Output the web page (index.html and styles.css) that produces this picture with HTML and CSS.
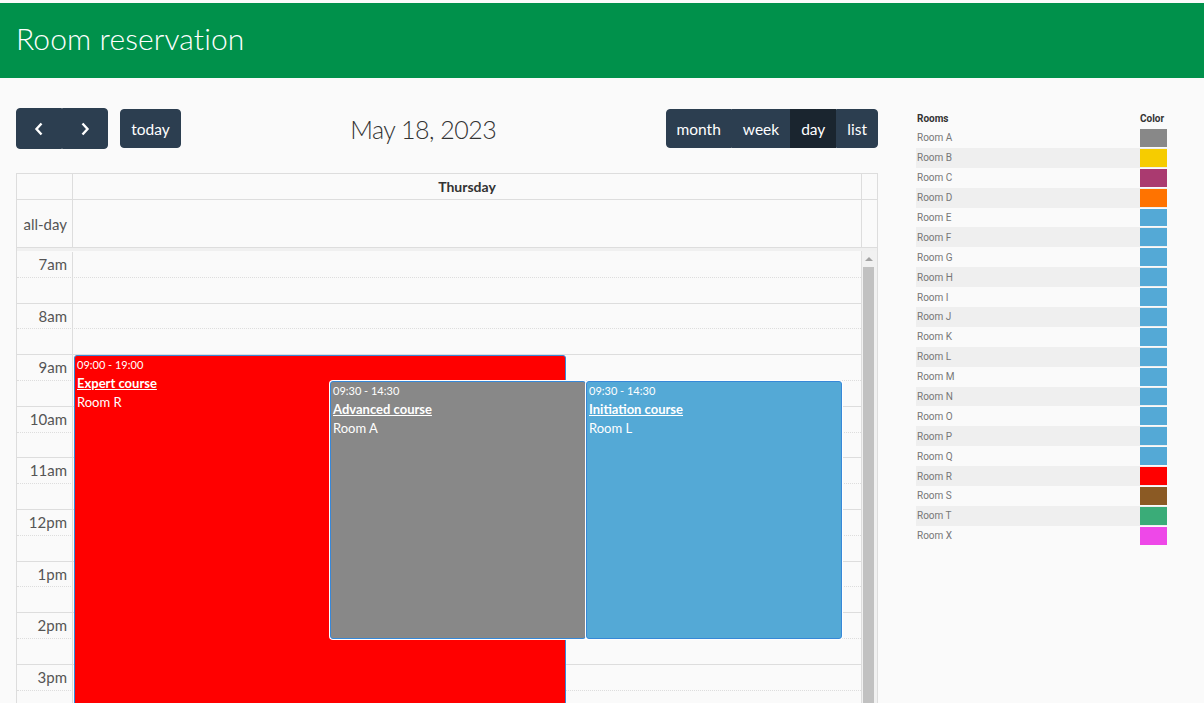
FILE: index.html
```html
<!DOCTYPE html>
<html lang="en">
<head>
<meta charset="utf-8">
<title>Room reservation</title>
<link rel="stylesheet" href="styles.css">
</head>
<body>
<header class="topbar"><h1 class="brand">Room reservation</h1></header>
<main class="layout">
  <section class="calendar">
    <div class="toolbar">
      <div class="chunk">
        <div class="btn-group">
          <button class="btn btn-icon" aria-label="prev"><svg width="10" height="14" viewBox="0 0 10 14"><polyline points="7.5,1.5 2.5,7 7.5,12.5" fill="none" stroke="#fff" stroke-width="2.4"/></svg></button>
          <button class="btn btn-icon" aria-label="next"><svg width="10" height="14" viewBox="0 0 10 14"><polyline points="2.5,1.5 7.5,7 2.5,12.5" fill="none" stroke="#fff" stroke-width="2.4"/></svg></button>
        </div>
        <button class="btn btn-today">today</button>
      </div>
      <h2 class="title">May 18, 2023</h2>
      <div class="btn-group views">
        <button class="btn">month</button>
        <button class="btn">week</button>
        <button class="btn active">day</button>
        <button class="btn">list</button>
      </div>
    </div>
    <div class="grid">
      <div class="head-row">
        <div class="axis"></div>
        <div class="lane day-head">Thursday</div>
        <div class="gutter"></div>
      </div>
      <div class="allday-row">
        <div class="axis axis-label">all-day</div>
        <div class="lane"></div>
        <div class="gutter"></div>
      </div>
      <div class="divider"></div>
      <div class="body">
        <div class="timegrid">
          <div class="slot hour"><div class="axis axis-label">7am</div><div class="lane"></div></div>
          <div class="slot half"><div class="axis"></div><div class="lane"></div></div>
          <div class="slot hour"><div class="axis axis-label">8am</div><div class="lane"></div></div>
          <div class="slot half"><div class="axis"></div><div class="lane"></div></div>
          <div class="slot hour"><div class="axis axis-label">9am</div><div class="lane"></div></div>
          <div class="slot half"><div class="axis"></div><div class="lane"></div></div>
          <div class="slot hour"><div class="axis axis-label">10am</div><div class="lane"></div></div>
          <div class="slot half"><div class="axis"></div><div class="lane"></div></div>
          <div class="slot hour"><div class="axis axis-label">11am</div><div class="lane"></div></div>
          <div class="slot half"><div class="axis"></div><div class="lane"></div></div>
          <div class="slot hour"><div class="axis axis-label">12pm</div><div class="lane"></div></div>
          <div class="slot half"><div class="axis"></div><div class="lane"></div></div>
          <div class="slot hour"><div class="axis axis-label">1pm</div><div class="lane"></div></div>
          <div class="slot half"><div class="axis"></div><div class="lane"></div></div>
          <div class="slot hour"><div class="axis axis-label">2pm</div><div class="lane"></div></div>
          <div class="slot half"><div class="axis"></div><div class="lane"></div></div>
          <div class="slot hour"><div class="axis axis-label">3pm</div><div class="lane"></div></div>
          <div class="slot half"><div class="axis"></div><div class="lane"></div></div>

          <div class="events">
            <a class="event ev-expert" style="top:104px;height:516px;">
              <span class="ev-time">09:00 - 19:00</span>
              <span class="ev-title">Expert course</span>
              <span class="ev-room">Room R</span>
            </a>
            <a class="event ev-advanced stacked" style="top:130px;height:258px;">
              <span class="ev-time">09:30 - 14:30</span>
              <span class="ev-title">Advanced course</span>
              <span class="ev-room">Room A</span>
            </a>
            <a class="event ev-initiation stacked" style="top:130px;height:258px;">
              <span class="ev-time">09:30 - 14:30</span>
              <span class="ev-title">Initiation course</span>
              <span class="ev-room">Room L</span>
            </a>
          </div>
        </div>
        <div class="scrollbar">
          <span class="sb-arrow"></span>
          <span class="sb-thumb"></span>
        </div>
      </div>
    </div>
  </section>

  <aside class="rooms">
    <table class="room-table">
      <thead><tr><th class="col-name">Rooms</th><th class="col-color">Color</th></tr></thead>
      <tbody>
        <tr><td>Room A</td><td class="sw"><span class="swatch c-gray"></span></td></tr>
        <tr><td>Room B</td><td class="sw"><span class="swatch c-yellow"></span></td></tr>
        <tr><td>Room C</td><td class="sw"><span class="swatch c-plum"></span></td></tr>
        <tr><td>Room D</td><td class="sw"><span class="swatch c-orange"></span></td></tr>
        <tr><td>Room E</td><td class="sw"><span class="swatch c-blue"></span></td></tr>
        <tr><td>Room F</td><td class="sw"><span class="swatch c-blue"></span></td></tr>
        <tr><td>Room G</td><td class="sw"><span class="swatch c-blue"></span></td></tr>
        <tr><td>Room H</td><td class="sw"><span class="swatch c-blue"></span></td></tr>
        <tr><td>Room I</td><td class="sw"><span class="swatch c-blue"></span></td></tr>
        <tr><td>Room J</td><td class="sw"><span class="swatch c-blue"></span></td></tr>
        <tr><td>Room K</td><td class="sw"><span class="swatch c-blue"></span></td></tr>
        <tr><td>Room L</td><td class="sw"><span class="swatch c-blue"></span></td></tr>
        <tr><td>Room M</td><td class="sw"><span class="swatch c-blue"></span></td></tr>
        <tr><td>Room N</td><td class="sw"><span class="swatch c-blue"></span></td></tr>
        <tr><td>Room O</td><td class="sw"><span class="swatch c-blue"></span></td></tr>
        <tr><td>Room P</td><td class="sw"><span class="swatch c-blue"></span></td></tr>
        <tr><td>Room Q</td><td class="sw"><span class="swatch c-blue"></span></td></tr>
        <tr><td>Room R</td><td class="sw"><span class="swatch c-red"></span></td></tr>
        <tr><td>Room S</td><td class="sw"><span class="swatch c-brown"></span></td></tr>
        <tr><td>Room T</td><td class="sw"><span class="swatch c-green"></span></td></tr>
        <tr><td>Room X</td><td class="sw"><span class="swatch c-pink"></span></td></tr>
      </tbody>
    </table>
  </aside>
</main>
</body>
</html>
```

FILE: styles.css
```css
* { box-sizing: border-box; }

html, body { height: 100%; }

body {
  margin: 0;
  background: #fafafa;
  font-family: Lato, "Noto Sans", "Liberation Sans", sans-serif;
  color: #333;
  overflow: hidden;
}

.topbar {
  margin-top: 3px;
  height: 75px;
  background: #00914b;
  display: flex;
  align-items: center;
  padding: 0 0 6px 16px;
}

.brand {
  margin: 0;
  font-size: 30px;
  font-weight: 300;
  color: #fff;
  letter-spacing: 0.1px;
}

.layout {
  display: flex;
  align-items: flex-start;
  gap: 38px;
  padding: 30px 0 0 16px;
}

.calendar { width: 862px; flex: none; }

.toolbar {
  display: flex;
  justify-content: space-between;
  align-items: center;
  height: 41px;
  margin-bottom: 24px;
}

.chunk { display: flex; align-items: center; gap: 12px; }

.btn-group { display: flex; }

.btn {
  border: 1px solid #2c3e50;
  background: #2c3e50;
  color: #fff;
  font-family: inherit;
  font-size: 15.5px;
  padding: 0 10px;
  height: 39px;
  border-radius: 0;
  cursor: pointer;
}

.btn-group .btn:first-child { border-radius: 4px 0 0 4px; }
.btn-group .btn:last-child { border-radius: 0 4px 4px 0; }

.btn.active { background: #1a252f; border-color: #1a252f; }

.btn-icon {
  width: 46px;
  height: 41px;
  display: flex;
  align-items: center;
  justify-content: center;
  padding: 0;
}

.btn-today { border-radius: 4px; width: 61px; padding: 0; }

.title {
  margin: 0;
  font-size: 25px;
  letter-spacing: -0.5px;
  font-weight: 300;
  color: #333;
}

.views .btn { padding: 0 10px; }

/* grid */
.grid {
  border: 1px solid #ddd;
}

.head-row, .allday-row {
  display: flex;
  border-bottom: 1px solid #ddd;
}

.head-row { height: 26px; }
.allday-row { height: 48px; }

.axis {
  width: 56px;
  flex: none;
  border-right: 1px solid #ddd;
}

.lane { flex: 1; }

.gutter {
  width: 16px;
  flex: none;
  border-left: 1px solid #ddd;
}

.day-head {
  text-align: center;
  font-weight: 700;
  font-size: 14px;
  line-height: 25px;
  color: #333;
}

.axis-label {
  text-align: right;
  padding-right: 5px;
  font-size: 15px;
  color: #555;
}

.allday-row .axis-label { line-height: 48px; }

.divider {
  height: 3px;
  background: #f0f0f0;
}

.body {
  display: flex;
  height: 452px;
  overflow: hidden;
}

.timegrid {
  position: relative;
  flex: 1;
}

.slot {
  display: flex;
  height: 25.8px;
}

.slot.hour { border-top: 1px solid #ddd; }
.slot.half { border-top: 1px dotted #ddd; }
.slot:first-child { border-top-color: transparent; }

.slot .axis-label { line-height: 24px; }

.events {
  position: absolute;
  top: 0;
  left: 56px;
  right: 1px;
  bottom: 0;
}

.event {
  position: absolute;
  display: flex;
  flex-direction: column;
  border: 1px solid #3788d8;
  border-radius: 3px;
  color: #fff;
  padding: 1px 2px;
  overflow: hidden;
}

.stacked { box-shadow: 0 0 0 1px #fff; }

.ev-expert { left: 1px; width: 492px; background: #ff0000; }
.ev-advanced { left: 257px; width: 256px; background: #888888; }
.ev-initiation { left: 513px; width: 256px; background: #54a9d6; }

.ev-time { font-size: 11px; line-height: 14px; margin-top: 1px; }
.ev-title { font-size: 13px; font-weight: 700; text-decoration: underline; line-height: 18px; margin-top: 2px; }
.ev-room { font-size: 13px; line-height: 18px; margin-top: 1px; }

.scrollbar {
  width: 16px;
  flex: none;
  position: relative;
  background: #f1f1f1;
  border-left: 1px solid #ddd;
}

.sb-arrow {
  position: absolute;
  top: 6px;
  left: 3px;
  width: 0;
  height: 0;
  border-left: 4px solid transparent;
  border-right: 4px solid transparent;
  border-bottom: 4px solid #a3a3a3;
}

.sb-thumb {
  position: absolute;
  top: 16px;
  left: 1px;
  width: 11px;
  bottom: 0;
  background: #c1c1c1;
}

/* rooms */
.rooms { width: 251px; flex: none; }

.room-table {
  width: 100%;
  border-collapse: collapse;
  font-family: Roboto, "Liberation Sans", sans-serif;
  font-size: 10px;
}

.room-table th {
  text-align: left;
  font-weight: 700;
  color: #333;
  height: 20px;
  padding: 0 1px;
}

.room-table .col-color { width: 27px; padding: 0; }

.room-table td {
  height: 19.9px;
  padding: 0 1px;
  color: #777;
}

.room-table tbody tr:nth-child(even) { background: #efefef; }

.room-table td.sw { padding: 1px 0; width: 27px; }

.swatch { display: block; width: 27px; height: 17.9px; }

.c-gray { background: #888888; }
.c-yellow { background: #f6cc00; }
.c-plum { background: #aa3a70; }
.c-orange { background: #ff7300; }
.c-blue { background: #54a9d6; }
.c-red { background: #ff0000; }
.c-brown { background: #8b5a24; }
.c-green { background: #3aac78; }
.c-pink { background: #ee48e8; }
```
